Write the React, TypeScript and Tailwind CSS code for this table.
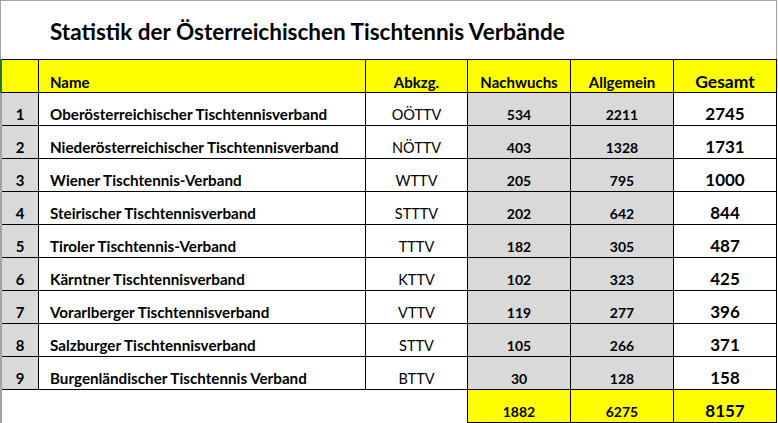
import React from 'react';

type Row = {
  nr: number;
  name: string;
  abk: string;
  nachwuchs: number;
  allgemein: number;
  gesamt: number;
};

const rows: Row[] = [
  { nr: 1, name: 'Oberösterreichischer Tischtennisverband', abk: 'OÖTTV', nachwuchs: 534, allgemein: 2211, gesamt: 2745 },
  { nr: 2, name: 'Niederösterreichischer Tischtennisverband', abk: 'NÖTTV', nachwuchs: 403, allgemein: 1328, gesamt: 1731 },
  { nr: 3, name: 'Wiener Tischtennis-Verband', abk: 'WTTV', nachwuchs: 205, allgemein: 795, gesamt: 1000 },
  { nr: 4, name: 'Steirischer Tischtennisverband', abk: 'STTTV', nachwuchs: 202, allgemein: 642, gesamt: 844 },
  { nr: 5, name: 'Tiroler Tischtennis-Verband', abk: 'TTTV', nachwuchs: 182, allgemein: 305, gesamt: 487 },
  { nr: 6, name: 'Kärntner Tischtennisverband', abk: 'KTTV', nachwuchs: 102, allgemein: 323, gesamt: 425 },
  { nr: 7, name: 'Vorarlberger Tischtennisverband', abk: 'VTTV', nachwuchs: 119, allgemein: 277, gesamt: 396 },
  { nr: 8, name: 'Salzburger Tischtennisverband', abk: 'STTV', nachwuchs: 105, allgemein: 266, gesamt: 371 },
  { nr: 9, name: 'Burgenländischer Tischtennis Verband', abk: 'BTTV', nachwuchs: 30, allgemein: 128, gesamt: 158 },
];

// column grid: left edge, nr, name, abk, nachwuchs, allgemein, gesamt
const grid = 'grid grid-cols-[2px_37px_327px_102px_103px_103px_103px]';
const cell = 'flex items-end leading-none border-r border-black';

export default function App() {
  return (
    <div className="w-[778px] h-[423px] bg-white overflow-hidden text-black font-['Lato','Liberation_Sans',sans-serif]">
      {/* title */}
      <div className="w-[777px] h-[59px] border-t border-l border-r border-[#a3a3a3] flex items-end pl-[49px] pb-[16px]">
        <h1 className="text-[22.5px] font-bold leading-none">
          Statistik der Österreichischen Tischtennis Verbände
        </h1>
      </div>

      {/* header */}
      <div className={`${grid} h-[34px] bg-[#ffff00] font-bold`}>
        <div className="bg-[#217346]" />
        <div className={`${cell} border-y`} />
        <div className={`${cell} border-y pb-[2px] pl-[11px] text-[15px]`}>Name</div>
        <div className={`${cell} border-y pb-[2px] justify-center text-[15px]`}>Abkzg.</div>
        <div className={`${cell} border-y pb-[2px] justify-center text-[15px]`}>Nachwuchs</div>
        <div className={`${cell} border-y pb-[2px] justify-center text-[15px]`}>Allgemein</div>
        <div className={`${cell} border-y pb-[2px] justify-center text-[17.5px]`}>Gesamt</div>
      </div>

      {/* data rows */}
      {rows.map((r) => (
        <div key={r.nr} className={`${grid} h-[33px]`}>
          <div className="bg-[#a3a3a3] border-b border-[#bdbdbd]" />
          <div className={`${cell} border-b pb-[3px] bg-[#d9d9d9] justify-center font-bold text-[15px]`}>{r.nr}</div>
          <div className={`${cell} border-b pb-[3px] pl-[11px] font-bold text-[15.2px]`}>{r.name}</div>
          <div className={`${cell} border-b pb-[3px] justify-center text-[14.5px]`}>{r.abk}</div>
          <div className={`${cell} border-b pb-[3px] bg-[#d9d9d9] justify-center font-bold text-[14px]`}>{r.nachwuchs}</div>
          <div className={`${cell} border-b pb-[3px] bg-[#d9d9d9] justify-center font-bold text-[14px]`}>{r.allgemein}</div>
          <div className={`${cell} border-b pb-[3px] justify-center font-bold text-[17px]`}>{r.gesamt}</div>
        </div>
      ))}

      {/* totals */}
      <div className={`${grid} h-[33px]`}>
        <div className="bg-[#a3a3a3]" />
        <div />
        <div />
        <div className="border-r border-black" />
        <div className={`${cell} border-b pb-[3px] bg-[#ffff00] justify-center font-bold text-[14px]`}>1882</div>
        <div className={`${cell} border-b pb-[3px] bg-[#ffff00] justify-center font-bold text-[14px]`}>6275</div>
        <div className={`${cell} border-b pb-[3px] bg-[#ffff00] justify-center font-bold text-[17px]`}>8157</div>
      </div>
    </div>
  );
}
